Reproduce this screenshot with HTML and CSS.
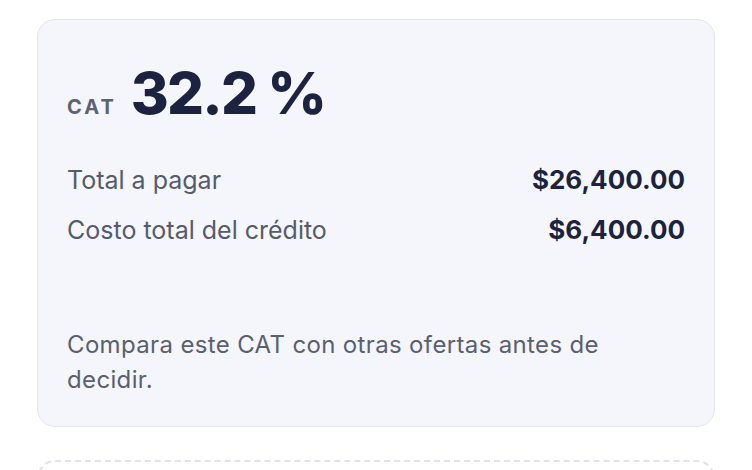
FILE: index.html
```html
<!DOCTYPE html>
<html lang="es">
<head>
<meta charset="UTF-8">
<title>Resumen del crédito</title>
<link rel="stylesheet" href="styles.css">
</head>
<body>

<div class="page">
    <div class="summary-card">
        <div class="cat-line">
            <span class="cat-label">CAT</span>
            <span class="cat-value">32.2 %</span>
        </div>

        <div class="totals">
            <div class="total-row">
                <span class="total-label">Total a pagar</span>
                <span class="total-amount">$26,400.00</span>
            </div>
            <div class="total-row">
                <span class="total-label">Costo total del crédito</span>
                <span class="total-amount">$6,400.00</span>
            </div>
        </div>

        <p class="note">Compara este CAT con otras ofertas antes de decidir.</p>
    </div>

    <div class="placeholder-card"></div>
</div>

</body>
</html>
```

FILE: styles.css
```css
body {
    margin: 0;
    background-color: #ffffff;
    font-family: Inter, "Noto Sans", sans-serif;
    color: #1b2340;
}

.page {
    padding: 19px 37px;
    display: flex;
    flex-direction: column;
    gap: 33px;
}

.summary-card {
    background-color: #f4f6fb;
    border: 1px solid #e2e6ee;
    border-radius: 18px;
    padding: 44px 29px 29px;
}

.cat-line {
    display: flex;
    align-items: baseline;
    gap: 14px;
    line-height: 58px;
}

.cat-label {
    font-size: 20px;
    font-weight: 700;
    letter-spacing: 3px;
    color: #5d6272;
}

.cat-value {
    font-size: 58px;
    font-weight: 800;
    letter-spacing: -0.03em;
    color: #1b2340;
}

.totals {
    margin-top: 26px;
    display: flex;
    flex-direction: column;
    gap: 14px;
}

.total-row {
    display: flex;
    justify-content: space-between;
    align-items: baseline;
    font-size: 25px;
    line-height: 36px;
}

.total-label {
    color: #555b6b;
}

.total-amount {
    font-size: 26px;
    font-weight: 700;
    color: #1b2340;
}

.note {
    margin: 79px 0 0;
    max-width: 580px;
    font-size: 24px;
    line-height: 35px;
    letter-spacing: 0.35px;
    color: #5a6070;
}

.placeholder-card {
    height: 140px;
    border: 2px dashed #e0e3e9;
    border-radius: 18px;
}
```
